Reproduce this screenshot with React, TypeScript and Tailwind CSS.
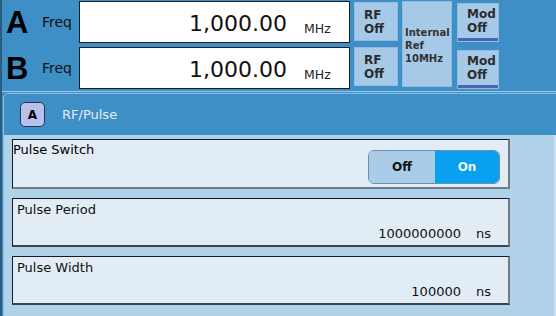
import React from "react"

function FreqRow({ ch }: { ch: string }) {
  return (
    <div className="flex h-[42px] items-center">
      <div className="w-[40px] pl-[4px] font-['Liberation_Sans',sans-serif] text-[31px] font-bold leading-none text-black">
        {ch}
      </div>
      <div className="w-[37px] text-[14px] text-[#111]">Freq</div>
      <div className="flex h-full w-[271px] items-center justify-end border-[1.5px] border-[#13202c] bg-white pt-[3px]">
        <span className="text-[22px] leading-none text-[#111]">1,000.00</span>
        <span className="w-[62px] self-end pb-[7px] pl-[17px] text-[12.5px] leading-none text-[#222]">MHz</span>
      </div>
    </div>
  )
}

function SmallBtn({ top, bottom, bar }: { top: string; bottom: string; bar?: boolean }) {
  return (
    <div className="flex h-[39px] flex-col border border-[#8fbde0] bg-[#a6c9e7]">
      <div className="flex flex-1 flex-col justify-center pl-[9px] text-[12px] font-bold leading-[14px] text-[#2c2c2c]">
        <span>{top}</span>
        <span>{bottom}</span>
      </div>
      {bar && <div className="h-[3px] bg-[#4b63b2]" />}
    </div>
  )
}

function ValueBox({ label, value }: { label: string; value: string }) {
  return (
    <div className="flex h-[49px] w-[498px] flex-col justify-between border-[1.5px] border-[#131c26] border-r-2 border-b-2 border-r-[#707c88] border-b-[#3a4550] bg-[#e1ecf5] pb-[5px] pl-[4px] pr-[17px] pt-[3px]">
      <span className="text-[13px] leading-[16px] text-[#111]">{label}</span>
      <div className="flex items-baseline justify-end text-[13px] leading-none text-[#111]">
        <span>{value}</span>
        <span className="ml-[15px]">ns</span>
      </div>
    </div>
  )
}

export default function App() {
  return (
    <div className="h-[316px] w-[556px] overflow-hidden border-l-2 border-[#2b5c7e] bg-[#3f8fc7] font-['DejaVu_Sans',sans-serif]">
      <div className="flex pt-[1px]">
        <div className="flex flex-col gap-[4px]">
          <FreqRow ch="A" />
          <FreqRow ch="B" />
        </div>

        <div className="ml-[4px] flex w-[44px] flex-col gap-[6px] pt-[1px]">
          <SmallBtn top="RF" bottom="Off" />
          <SmallBtn top="RF" bottom="Off" />
        </div>

        <div className="ml-[4px] flex h-[86px] w-[50px] flex-col justify-center border border-[#8fbde0] bg-[#a6c9e7] pl-[2px] pt-[2px] text-[10px] font-bold leading-[13px] text-[#333]">
          <span>Internal</span>
          <span>Ref</span>
          <span>10MHz</span>
        </div>

        <div className="ml-[5px] flex w-[42px] flex-col gap-[8px] pt-[2px]">
          <SmallBtn top="Mod" bottom="Off" bar />
          <SmallBtn top="Mod" bottom="Off" bar />
        </div>
      </div>

      <div className="mt-[2px] h-[1px] bg-[#9cc8e6]" />

      <div className="ml-[1px] mt-[1px] overflow-hidden rounded-tl-[5px] border-l border-t border-[#8cbfe2]">
        <div className="flex h-[41px] items-center bg-[#3f8fc7] pl-[16px]">
          <div className="flex h-[25px] w-[25px] items-center justify-center rounded-[5px] border border-[#2a3354] bg-[#b9c0ec] text-[12px] font-bold text-black">
            A
          </div>
          <span className="ml-[17px] text-[13px] text-[#e4ecf6]">RF/Pulse</span>
        </div>

        <div className="flex h-[200px] flex-col gap-[9px] border-r-2 border-[#c8e0f0] bg-[#afd2e8] pl-[8px] pt-[4px]">
          <div className="flex h-[50px] w-[498px] justify-between border-[1.5px] border-[#131c26] border-r-2 border-b-2 border-r-[#707c88] border-b-[#707c88] bg-[#e1ecf5] pt-[2px]">
            <span className="text-[13px] leading-[16px] text-black">Pulse Switch</span>
            <div className="mb-[3px] mr-[8px] flex h-[34px] w-[132px] self-end overflow-hidden rounded-[6px] border border-[#6d8dab] text-[12px] font-bold">
              <div className="flex w-[66px] items-center justify-center bg-[#a9cde8] text-[#111]">Off</div>
              <div className="flex flex-1 items-center justify-center bg-[#09a0ef] text-[#eef6ff]">On</div>
            </div>
          </div>

          <ValueBox label="Pulse Period" value="1000000000" />
          <ValueBox label="Pulse Width" value="100000" />
        </div>
      </div>
    </div>
  )
}
